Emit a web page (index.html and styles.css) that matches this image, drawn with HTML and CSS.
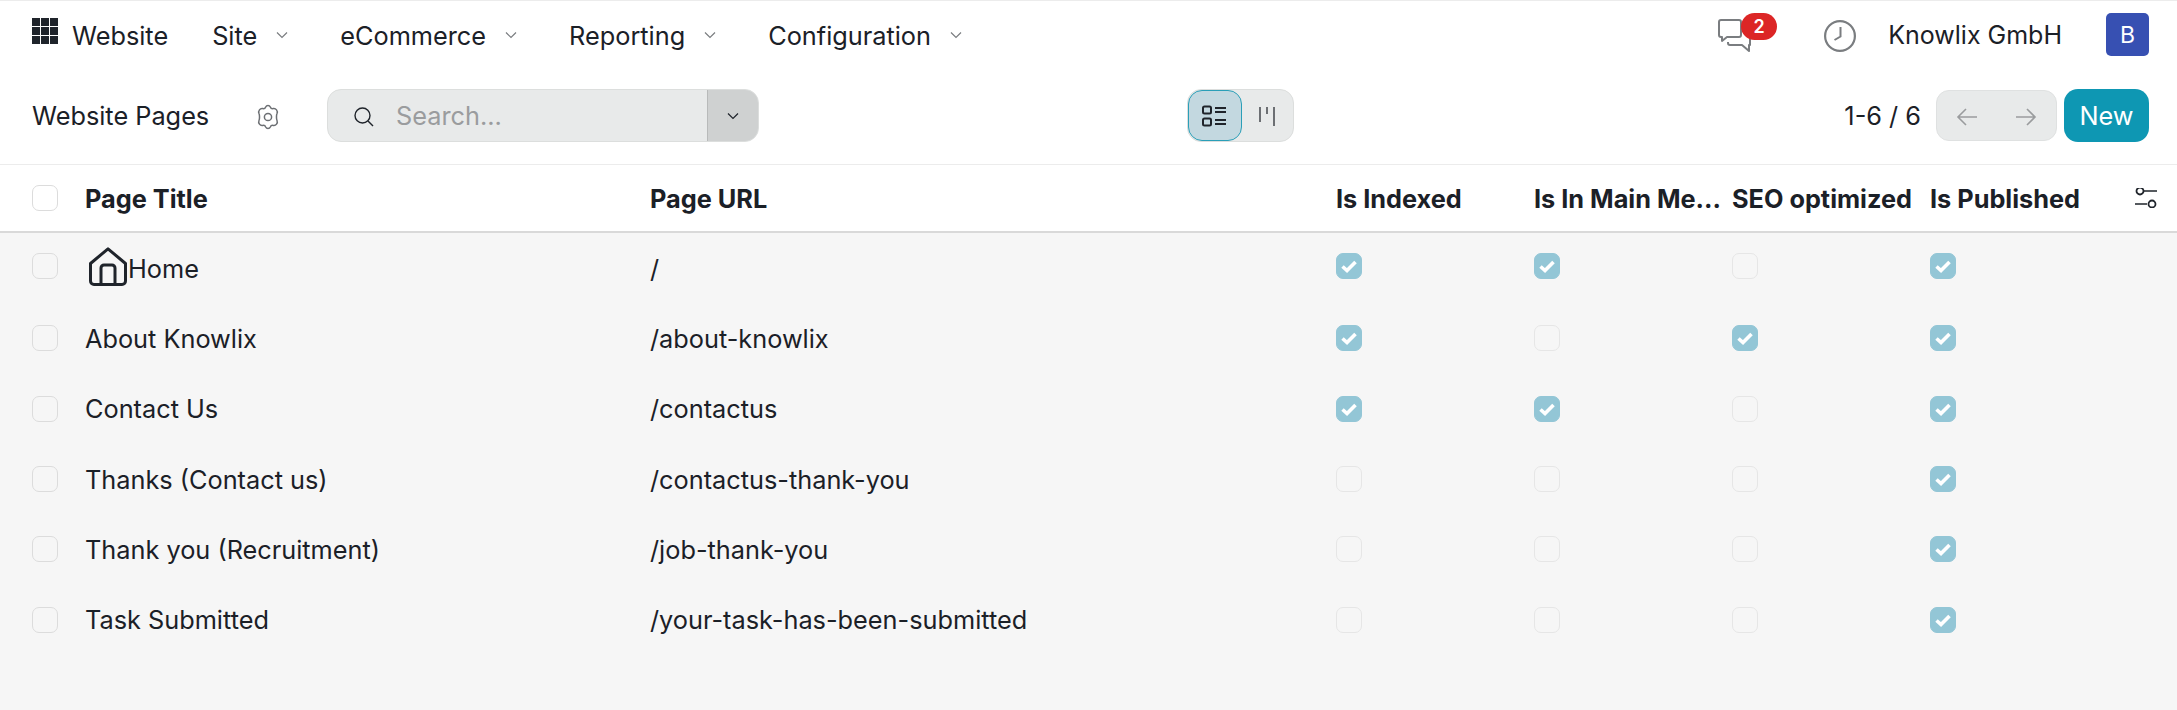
FILE: index.html
```html
<!DOCTYPE html>
<html lang="en">
<head>
<meta charset="utf-8">
<title>Website Pages</title>
<link rel="stylesheet" href="styles.css">
</head>
<body>
<svg class="defs" width="0" height="0" aria-hidden="true">
  <symbol id="chev" viewBox="0 0 14 14"><path d="M2 4.5 7 9.5 12 4.5" fill="none" stroke="currentColor" stroke-width="1.2"/></symbol>
  <symbol id="tick" viewBox="0 0 26 26"><path d="M6.500 13.500 11 17.500 19.500 9" fill="none" stroke="#fff" stroke-width="3.600"/></symbol>
</svg>
<nav class="topbar">
  <svg class="apps" viewBox="0 0 26 26"><path d="M0 0h8v8H0zM9 0h8v8H9zM18 0h8v8h-8zM0 9h8v8H0zM9 9h8v8H9zM18 9h8v8h-8zM0 18h8v8H0zM9 18h8v8H9zM18 18h8v8h-8z" fill="#1f242b"/></svg>
  <span class="brand">Website</span>
  <span class="menu">Site<svg class="chev"><use href="#chev"/></svg></span>
  <span class="menu">eCommerce<svg class="chev"><use href="#chev"/></svg></span>
  <span class="menu">Reporting<svg class="chev"><use href="#chev"/></svg></span>
  <span class="menu">Configuration<svg class="chev"><use href="#chev"/></svg></span>
  <span class="spacer"></span>
  <span class="chat">
    <svg viewBox="0 0 34 34" class="chat-icon"><path d="M1 3a2 2 0 0 1 2-2h18a2 2 0 0 1 2 2v13a2 2 0 0 1-2 2H9l-5 4v-4H3a2 2 0 0 1-2-2z M10 23v1a2 2 0 0 0 2 2h12l7 6v-6h1V11" fill="none" stroke="#7a7d80" stroke-width="2" stroke-linejoin="round"/></svg>
    <span class="badge">2</span>
  </span>
  <svg viewBox="0 0 32 32" class="clock"><circle cx="16" cy="16" r="14.900" fill="none" stroke="#7a7d80" stroke-width="2.200"/><path d="M16.500 7v9.500L10.500 20" fill="none" stroke="#7a7d80" stroke-width="2"/></svg>
  <span class="company">Knowlix GmbH</span>
  <span class="avatar">B</span>
</nav>
<header class="control">
  <span class="crumb">Website Pages</span>
  <svg viewBox="0 0 24 26" class="gear"><path d="M9.700 3C10.600 1 13.400 1 14.300 3C14.800 4.300 16 4.900 17.300 4.600C19.900 4.100 22.100 6.900 21 9.500C20.300 11 20.300 15 21 16.500C22.100 19.100 19.900 21.900 17.300 21.400C16 21.100 14.800 21.700 14.300 23C13.400 25 10.600 25 9.700 23C9.200 21.700 8 21.100 6.700 21.400C4.100 21.900 1.900 19.100 3 16.500C3.700 15 3.700 11 3 9.500C1.900 6.900 4.100 4.100 6.700 4.600C8 4.900 9.200 4.300 9.700 3Z" fill="none" stroke="#6c6f73" stroke-width="1.500" stroke-linejoin="round"/><circle cx="12" cy="13" r="3.600" fill="none" stroke="#6c6f73" stroke-width="1.500"/></svg>
  <div class="search">
    <div class="search-field">
      <svg viewBox="0 0 22 22" class="mag"><circle cx="9.500" cy="9.500" r="7.500" fill="none" stroke="#1f242b" stroke-width="1.400"/><path d="M15 15l5 5" stroke="#1f242b" stroke-width="1.400"/></svg>
      <span class="placeholder">Search...</span>
    </div>
    <span class="search-drop"><svg class="chev dark"><use href="#chev"/></svg></span>
  </div>
  <div class="switcher">
    <span class="view active"><svg viewBox="0 0 26 22" class="view-icon"><rect x="1" y="1.500" width="8" height="7" rx="1.500" fill="none" stroke="#1f242b" stroke-width="2"/><rect x="1" y="13.500" width="8" height="7" rx="1.500" fill="none" stroke="#1f242b" stroke-width="2"/><path d="M13 3h11M13 7h11M13 15h11M13 19h11" stroke="#1f242b" stroke-width="2"/></svg></span>
    <span class="view"><svg viewBox="0 0 18 22" class="kanban-icon"><path d="M2 2v15M9 2v7M16 2v19" stroke="#6c6f73" stroke-width="2"/></svg></span>
  </div>
  <span class="spacer"></span>
  <span class="pager">1-6 / 6</span>
  <div class="pager-btns">
    <span class="pg"><svg viewBox="0 0 22 20" class="arrow"><path d="M21 10H2M10 2l-8 8 8 8" fill="none" stroke="#9a9c9e" stroke-width="1.600"/></svg></span>
    <span class="pg"><svg viewBox="0 0 22 20" class="arrow"><path d="M1 10h19M12 2l8 8-8 8" fill="none" stroke="#9a9c9e" stroke-width="1.600"/></svg></span>
  </div>
  <span class="new">New</span>
</header>
<main class="list">
  <div class="row head">
    <span class="cb plain"></span><span>Page Title</span><span>Page URL</span><span>Is Indexed</span><span>Is In Main Me...</span><span>SEO optimized</span><span>Is Published</span>
    <svg viewBox="0 0 22 20" class="opts"><path d="M9 3h13M0 16h12" stroke="#1f242b" stroke-width="1.600"/><circle cx="5" cy="3" r="3.500" fill="#fff" stroke="#1f242b" stroke-width="1.800"/><circle cx="17" cy="16" r="3.500" fill="#fff" stroke="#1f242b" stroke-width="1.800"/></svg>
  </div>
  <div class="row first">
    <span class="cb"></span>
    <span class="title-home"><svg viewBox="0 0 38 39" class="home"><path d="M1.500 16.500 19 1.800l17.500 14.700V34a3.500 3.500 0 0 1-3.500 3.500H5A3.500 3.500 0 0 1 1.500 34zM12 37.500V21a3 3 0 0 1 3-3h8a3 3 0 0 1 3 3v16.500" fill="none" stroke="#1f242b" stroke-width="3" stroke-linejoin="round"/></svg>Home</span>
    <span>/</span>
    <span class="cb on"><svg><use href="#tick"/></svg></span>
    <span class="cb on"><svg><use href="#tick"/></svg></span>
    <span class="cb off"></span>
    <span class="cb on"><svg><use href="#tick"/></svg></span>
  </div>
  <div class="row">
    <span class="cb"></span><span>About Knowlix</span><span>/about-knowlix</span>
    <span class="cb on"><svg><use href="#tick"/></svg></span>
    <span class="cb off"></span>
    <span class="cb on"><svg><use href="#tick"/></svg></span>
    <span class="cb on"><svg><use href="#tick"/></svg></span>
  </div>
  <div class="row">
    <span class="cb"></span><span>Contact Us</span><span>/contactus</span>
    <span class="cb on"><svg><use href="#tick"/></svg></span>
    <span class="cb on"><svg><use href="#tick"/></svg></span>
    <span class="cb off"></span>
    <span class="cb on"><svg><use href="#tick"/></svg></span>
  </div>
  <div class="row">
    <span class="cb"></span><span>Thanks (Contact us)</span><span>/contactus-thank-you</span>
    <span class="cb off"></span><span class="cb off"></span><span class="cb off"></span>
    <span class="cb on"><svg><use href="#tick"/></svg></span>
  </div>
  <div class="row">
    <span class="cb"></span><span>Thank you (Recruitment)</span><span>/job-thank-you</span>
    <span class="cb off"></span><span class="cb off"></span><span class="cb off"></span>
    <span class="cb on"><svg><use href="#tick"/></svg></span>
  </div>
  <div class="row">
    <span class="cb"></span><span>Task Submitted</span><span>/your-task-has-been-submitted</span>
    <span class="cb off"></span><span class="cb off"></span><span class="cb off"></span>
    <span class="cb on"><svg><use href="#tick"/></svg></span>
  </div>
</main>
</body>
</html>
```
FILE: styles.css
```css
* { box-sizing: border-box; }
html, body { margin: 0; height: 100%; }
body {
  background: #f6f6f6;
  color: #1b2027;
  font-family: Inter, "Liberation Sans", sans-serif;
  font-size: 25.300px;
  overflow: hidden;
}
.defs { position: absolute; }
.spacer { flex: 1; }

.topbar {
  height: 70px;
  background: #fff;
  border-top: 1px solid #ececec;
  display: flex;
  align-items: center;
  padding: 0 28px 0 32px;
}
.apps { width: 26px; height: 26px; margin-top: -9px; flex: none; }
.brand { margin-left: 14px; margin-right: 44px; margin-top: -1px; }
.menu { display: flex; align-items: center; margin-right: 51px; margin-top: -1px; }
.chev { width: 14px; height: 14px; margin-left: 18px; color: #7a7d80; }
.chev.dark { margin: 0; color: #1f242b; }
.chat { position: relative; display: flex; margin-right: 72px; padding-top: 1px; }
.chat-icon { width: 34px; height: 34px; }
.badge {
  position: absolute;
  left: 23px;
  top: -5px;
  width: 36px;
  height: 27px;
  border-radius: 14px;
  background: #dc2626;
  color: #fff;
  font-size: 18px;
  font-weight: 600;
  display: flex;
  align-items: center;
  justify-content: center;
}
.clock { width: 32px; height: 32px; }
.company { margin-left: 32px; margin-right: 44px; margin-top: -1px; font-size: 25px; }
.avatar {
  width: 43px;
  height: 43px;
  border-radius: 5px;
  background: #3750b2;
  color: #fff;
  font-size: 23px;
  display: flex;
  align-items: center;
  justify-content: center;
  margin-top: -2px;
}

.control {
  height: 95px;
  background: #fff;
  border-bottom: 1px solid #ececec;
  display: flex;
  align-items: center;
  padding: 0 28px 3px 32px;
}
.crumb { width: 224px; }
.gear { width: 24px; height: 26px; margin-top: 3px; }
.search {
  margin-left: 47px;
  width: 432px;
  height: 53px;
  display: flex;
  border-radius: 14px;
  border: 1px solid #dcdedd;
  background: #e8eaea;
  overflow: hidden;
}
.search-field { flex: 1; display: flex; align-items: center; padding-left: 25px; }
.mag { width: 22px; height: 22px; margin-top: 3px; }
.placeholder { margin-left: 21px; color: #9a9c9e; }
.search-drop {
  width: 51px;
  background: #cfd1d1;
  border-left: 1px solid #b8baba;
  display: flex;
  align-items: center;
  justify-content: center;
}
.switcher {
  display: flex;
  width: 107px;
  height: 53px;
  margin-left: 428px;
  background: #e8eaea;
  border: 1px solid #dcdedd;
  border-radius: 14px;
}
.view { flex: 1; display: flex; align-items: center; justify-content: center; border-radius: 14px; }
.view.active { flex: 0 0 54px; background: #c3d8e0; border: 1px solid #2a9fb8; }
.view-icon { width: 26px; height: 22px; }
.kanban-icon { width: 18px; height: 22px; margin-left: -2px; }
.pager { margin-right: 15px; }
.pager-btns {
  display: flex;
  width: 121px;
  height: 51px;
  background: #e8eaea;
  border: 1px solid #dfe1e1;
  border-radius: 13px;
}
.pg { flex: 1; display: flex; align-items: center; justify-content: center; padding-top: 3px; }
.arrow { width: 22px; height: 20px; }
.new {
  margin-left: 7px;
  width: 85px;
  height: 53px;
  border-radius: 14px;
  background: #0e97b3;
  color: #fff;
  display: flex;
  align-items: center;
  justify-content: center;
}

.row {
  display: grid;
  grid-template-columns: 53px 565px 686px 198px 198px 198px 205px 1fr;
  align-items: center;
  height: 70.300px;
  padding-left: 32px;
}
.row.head {
  height: 68px;
  background: #fff;
  border-bottom: 2px solid #d9d9d9;
  font-weight: 700;
}
.cb {
  width: 26px;
  height: 26px;
  border-radius: 7px;
  border: 1px solid #dcdcdc;
  background: #f6f6f6;
  display: block;
}
.cb.plain { background: #fff; }
.cb.off { border-color: #e6e6e6; }
.cb.on { background: #93c6d6; border-color: #93c6d6; position: relative; }
.cb.on svg { position: absolute; inset: -1px; width: 26px; height: 26px; }
.first .cb { margin-top: -4px; }
.title-home { display: flex; align-items: center; gap: 1px; padding-left: 4px; }
.home { width: 38px; height: 39px; margin-top: -3px; flex: none; }
.opts { width: 22px; height: 20px; }
```
